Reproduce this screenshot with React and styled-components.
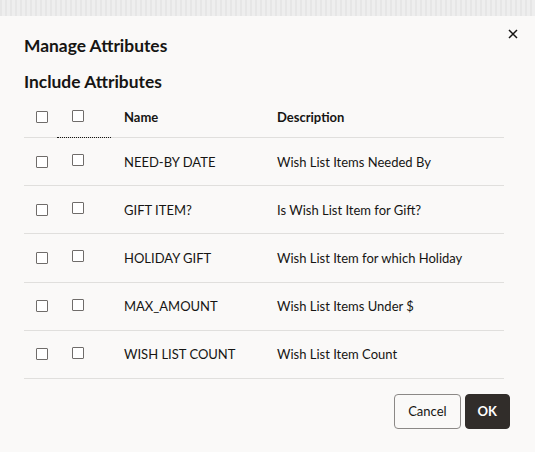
import React from 'react';
import styled, { createGlobalStyle } from 'styled-components';

const rows = [
  { name: 'NEED-BY DATE', description: 'Wish List Items Needed By' },
  { name: 'GIFT ITEM?', description: 'Is Wish List Item for Gift?' },
  { name: 'HOLIDAY GIFT', description: 'Wish List Item for which Holiday' },
  { name: 'MAX_AMOUNT', description: 'Wish List Items Under $' },
  { name: 'WISH LIST COUNT', description: 'Wish List Item Count' },
];

const GlobalStyle = createGlobalStyle`
  html, body {
    margin: 0;
    padding: 0;
    background: #faf9f8;
  }
  body {
    font-family: Lato, "Noto Sans", sans-serif;
    color: #161513;
  }
`;

const Backdrop = styled.div`
  height: 16px;
  background: repeating-linear-gradient(90deg, #e6e6e6 0 2px, #eeeeee 2px 5px);
`;

const Dialog = styled.div`
  position: relative;
  background: #faf9f8;
  width: 535px;
  height: 436px;
  box-sizing: border-box;
  padding: 0 24px;
  display: flex;
  flex-direction: column;
`;

const Title = styled.h1`
  margin: 0;
  padding-top: 19px;
  font-size: 17.4px;
  line-height: 22px;
  font-weight: 700;
`;

const SubTitle = styled.h2`
  margin: 0;
  padding-top: 14px;
  font-size: 17.4px;
  line-height: 22px;
  font-weight: 700;
`;

const CloseButton = styled.button`
  position: absolute;
  top: 11px;
  right: 15px;
  width: 14px;
  height: 14px;
  padding: 0;
  border: none;
  background: none;
  cursor: pointer;
  svg {
    display: block;
  }
`;

const Table = styled.div`
  margin-top: 7px;
  width: 480px;
`;

const Row = styled.div`
  display: grid;
  grid-template-columns: 33px 54px 154px 1fr;
  box-sizing: border-box;
  height: ${(p) => (p.$header ? '38px' : '48.2px')};
  padding-bottom: ${(p) => (p.$header ? '3px' : '0')};
  border-bottom: 1px solid #e0dfdd;
  align-items: center;
  font-size: 13px;
  font-weight: ${(p) => (p.$header ? 700 : 400)};
`;

const Cell = styled.div`
  height: 100%;
  box-sizing: border-box;
  display: flex;
  align-items: center;
  padding-left: ${(p) => p.$pad || 0}px;
`;

const FocusCell = styled(Cell)`
  position: relative;
  &::after {
    content: '';
    position: absolute;
    left: 0;
    right: 0;
    bottom: -4px;
    border-bottom: 1px dotted #161513;
  }
`;

const Box = styled.span`
  display: block;
  width: 10px;
  height: 10px;
  border: 1px solid #6f6c6a;
  border-radius: 1px;
  background: #fff;
  margin-top: ${(p) => (p.$raised ? '-3px' : '0')};
`;

const Footer = styled.div`
  display: flex;
  justify-content: flex-end;
  gap: 4px;
  margin-top: 15px;
  margin-right: 1px;
`;

const Button = styled.button`
  height: 35px;
  padding: 0 ${(p) => (p.$primary ? '12px' : '13px')};
  border-radius: 4px;
  font-family: inherit;
  font-size: 13px;
  font-weight: ${(p) => (p.$primary ? 700 : 400)};
  color: ${(p) => (p.$primary ? '#ffffff' : '#161513')};
  background: ${(p) => (p.$primary ? '#312d2a' : '#faf9f8')};
  border: 1px solid ${(p) => (p.$primary ? '#312d2a' : '#8b8886')};
  cursor: pointer;
`;

export default function App() {
  return (
    <>
      <GlobalStyle />
      <Backdrop />
      <Dialog>
        <CloseButton aria-label="Close">
          <svg width="14" height="14" viewBox="0 0 14 14">
            <path d="M3 3 L11 11 M11 3 L3 11" stroke="#161513" strokeWidth="1.5" />
          </svg>
        </CloseButton>
        <Title>Manage Attributes</Title>
        <SubTitle>Include Attributes</SubTitle>
        <Table>
          <Row $header>
            <Cell $pad={12}>
              <Box />
            </Cell>
            <FocusCell $pad={15}>
              <Box $raised />
            </FocusCell>
            <Cell $pad={13}>Name</Cell>
            <Cell $pad={12}>Description</Cell>
          </Row>
          {rows.map((r) => (
            <Row key={r.name}>
              <Cell $pad={12}>
                <Box />
              </Cell>
              <Cell $pad={15}>
                <Box $raised />
              </Cell>
              <Cell $pad={13}>{r.name}</Cell>
              <Cell $pad={12}>{r.description}</Cell>
            </Row>
          ))}
        </Table>
        <Footer>
          <Button>Cancel</Button>
          <Button $primary>OK</Button>
        </Footer>
      </Dialog>
    </>
  );
}
